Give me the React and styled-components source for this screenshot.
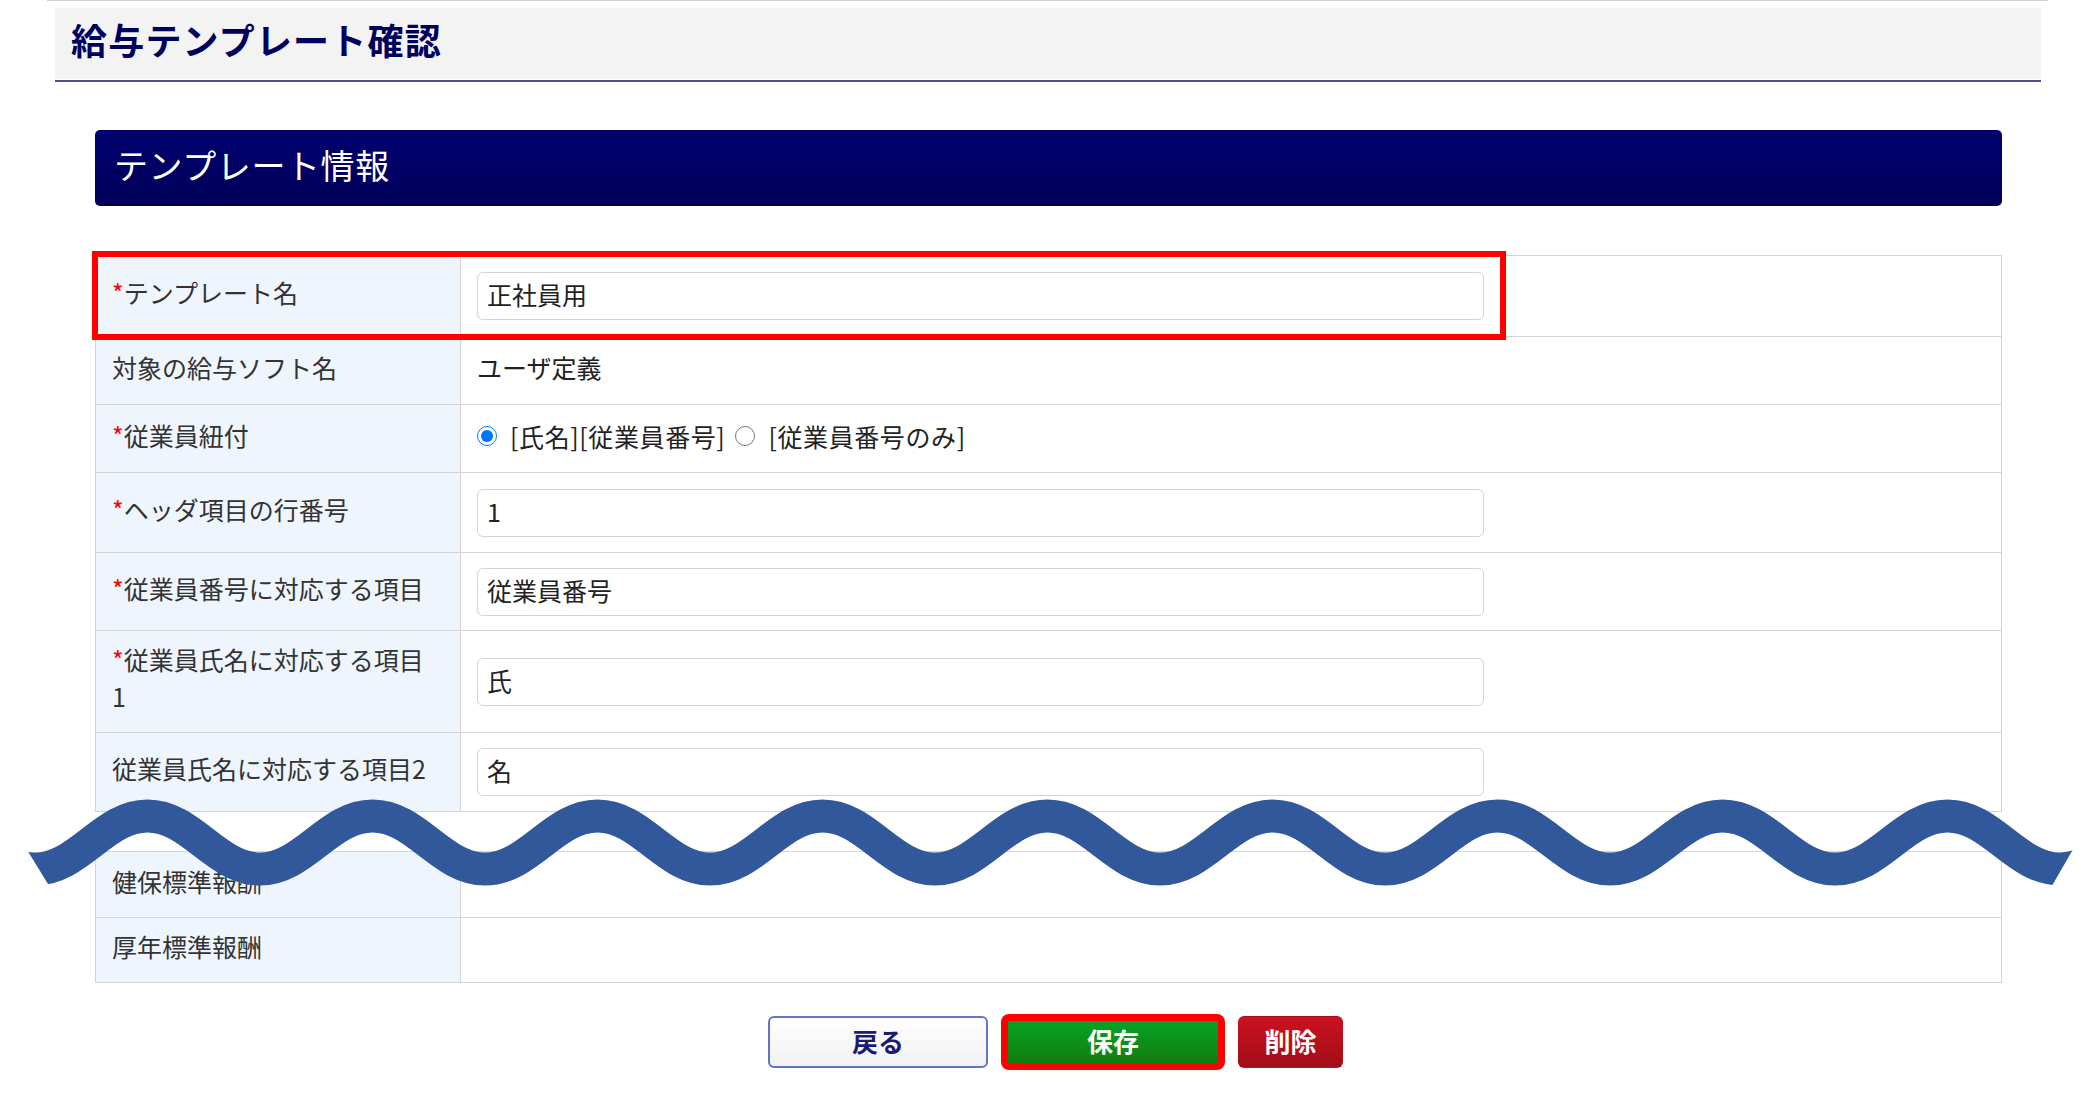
import styled, { createGlobalStyle } from 'styled-components'

const GlobalStyle = createGlobalStyle`
	html, body {
		margin: 0;
		padding: 0;
		background: #fff;
	}
	body {
		font-family: "Noto Sans CJK JP", "Noto Sans", sans-serif;
		color: #333;
	}
`

const Page = styled.div`
	position: relative;
	width: 2081px;
	min-height: 1116px;
	overflow: hidden;
`

const TopRule = styled.div`
	height: 1px;
	margin: 0 0 7px 47px;
	width: 2001px;
	background: #cfcfcf;
`

const Main = styled.div`
	margin-left: 55px;
	width: 1986px;
`

const TitleBar = styled.div`
	padding-bottom: 1px;
	border-bottom: 2px solid #4d5192;
`

const Title = styled.h1`
	box-sizing: border-box;
	margin: 0;
	height: 71px;
	display: flex;
	align-items: center;
	padding: 0 0 9px 16px;
	background: #f3f3f3;
	font-size: 36px;
	font-weight: 700;
	color: #00005e;
	letter-spacing: 1.2px;
`

const Content = styled.div`
	margin-left: 40px;
	width: 1907px;
`

const SectionHeader = styled.h2`
	box-sizing: border-box;
	margin: 48px 0 0;
	height: 76px;
	display: flex;
	align-items: center;
	padding: 0 0 7px 19px;
	border-radius: 5px;
	background: linear-gradient(#000070, #000058);
	font-size: 34px;
	font-weight: 400;
	color: #fff;
	letter-spacing: 0.6px;
`

const Table = styled.div`
	position: relative;
	margin-top: 49px;
	border: 1px solid #d4d4d4;
	border-bottom: none;
`

const Row = styled.div`
	display: grid;
	grid-template-columns: 365px 1fr;
	height: ${(p) => p.h}px;
	border-bottom: 1px solid #d4d4d4;
`

const GapRow = styled.div`
	height: 39px;
	border-bottom: 1px solid #d4d4d4;
	margin: 0 -1px;
	background: #fff;
`

const Label = styled.div`
	display: flex;
	align-items: center;
	padding: 0 26px 7px 16px;
	background: #eef5fd;
	border-right: 1px solid #d4d4d4;
	font-size: 25px;
	line-height: 37px;
	color: #333;
`

const Req = styled.span`
	color: #ff0000;
`

const Value = styled.div`
	display: flex;
	align-items: center;
	padding-left: 16px;
	font-size: 25px;
	color: #222;
`

const PlainText = styled.span`
	margin-bottom: 7px;
`

const TextInput = styled.input`
	box-sizing: border-box;
	width: 1007px;
	height: 48px;
	padding: 0 9px 4px;
	border: 1px solid #d3d3d3;
	border-radius: 6px;
	background: #fff;
	font-family: inherit;
	font-size: 25px;
	color: #222;
	outline: none;
`

const RadioGroup = styled.div`
	display: flex;
	align-items: center;
	gap: 10px;
	margin-bottom: 6px;
	letter-spacing: 0.6px;
`

const RadioLabel = styled.label`
	display: flex;
	align-items: center;
	gap: 13px;
`

const Radio = styled.input`
	width: 20px;
	height: 20px;
	margin: 0;
	accent-color: #0075ff;
`

const Highlight = styled.div`
	position: absolute;
	left: -4px;
	top: -5px;
	width: 1414px;
	height: 89px;
	box-sizing: border-box;
	border: 6px solid #ff0000;
	pointer-events: none;
`

const ButtonBar = styled.div`
	display: flex;
	justify-content: center;
	gap: 15px;
	margin-top: 33px;
	padding-left: 14px;
`

const Button = styled.button`
	height: 52px;
	width: ${(p) => p.w}px;
	padding: 0 0 4px;
	border-radius: 6px;
	font-family: inherit;
	font-size: 26px;
	font-weight: 700;
	cursor: pointer;
	border: ${(p) => (p.kind === 'back' ? '2px solid #6274c4' : '1px solid transparent')};
	background: ${(p) =>
		p.kind === 'back'
			? 'linear-gradient(#ffffff, #f1f1f3)'
			: p.kind === 'save'
			? 'linear-gradient(#07a527, #137a0c)'
			: 'linear-gradient(#cc111f, #a20e18)'};
	color: ${(p) => (p.kind === 'back' ? '#1b1b74' : '#fff')};
	outline: ${(p) => (p.marked ? '7px solid #ff0000' : 'none')};
	outline-offset: -5px;
`

const Wave = styled.svg`
	position: absolute;
	left: 0;
	top: 780px;
	pointer-events: none;
`

// sine-like wave, troughs every 225px starting at x=35
const wavePath = (() => {
	const half = 112.5
	const hi = 36
	const lo = 89
	let x = -77.5
	let y = hi
	let d = `M ${x} ${y}`
	for (let i = 0; i < 20; i++) {
		const ny = y === hi ? lo : hi
		d += ` C ${x + 44} ${y} ${x + half - 44} ${ny} ${x + half} ${ny}`
		x += half
		y = ny
	}
	return d
})()

const App = () => {
	return (
		<Page>
			<GlobalStyle />
			<TopRule />
			<Main>
				<TitleBar>
					<Title>給与テンプレート確認</Title>
				</TitleBar>
				<Content>
					<SectionHeader>テンプレート情報</SectionHeader>
					<Table>
						<Row h={80}>
							<Label>
								<Req>*</Req>テンプレート名
							</Label>
							<Value>
								<TextInput defaultValue="正社員用" />
							</Value>
						</Row>
						<Row h={67}>
							<Label>対象の給与ソフト名</Label>
							<Value>
								<PlainText>ユーザ定義</PlainText>
							</Value>
						</Row>
						<Row h={67}>
							<Label>
								<Req>*</Req>従業員紐付
							</Label>
							<Value>
								<RadioGroup>
									<RadioLabel>
										<Radio type="radio" name="link" defaultChecked />
										[氏名][従業員番号]
									</RadioLabel>
									<RadioLabel>
										<Radio type="radio" name="link" />
										[従業員番号のみ]
									</RadioLabel>
								</RadioGroup>
							</Value>
						</Row>
						<Row h={79}>
							<Label>
								<Req>*</Req>ヘッダ項目の行番号
							</Label>
							<Value>
								<TextInput defaultValue="1" />
							</Value>
						</Row>
						<Row h={77}>
							<Label>
								<Req>*</Req>従業員番号に対応する項目
							</Label>
							<Value>
								<TextInput defaultValue="従業員番号" />
							</Value>
						</Row>
						<Row h={101}>
							<Label>
								<span>
									<Req>*</Req>従業員氏名に対応する項目1
								</span>
							</Label>
							<Value>
								<TextInput defaultValue="氏" />
							</Value>
						</Row>
						<Row h={78}>
							<Label>従業員氏名に対応する項目2</Label>
							<Value>
								<TextInput defaultValue="名" />
							</Value>
						</Row>
						<GapRow />
						<Row h={65}>
							<Label>健保標準報酬</Label>
							<Value />
						</Row>
						<Row h={64}>
							<Label>厚年標準報酬</Label>
							<Value />
						</Row>
						<Highlight />
					</Table>
					<ButtonBar>
						<Button kind="back" w={220}>戻る</Button>
						<Button kind="save" w={220} marked>保存</Button>
						<Button kind="delete" w={105}>削除</Button>
					</ButtonBar>
				</Content>
			</Main>
			<Wave width="2081" height="130" viewBox="0 0 2081 130">
				<defs>
					<clipPath id="waveClip">
						<polygon points="-16,0 2113,0 2038,130 64,130" />
					</clipPath>
				</defs>
				<path
					d={wavePath}
					fill="none"
					stroke="#31589a"
					strokeWidth="33"
					clipPath="url(#waveClip)"
				/>
			</Wave>
		</Page>
	)
}

export default App
